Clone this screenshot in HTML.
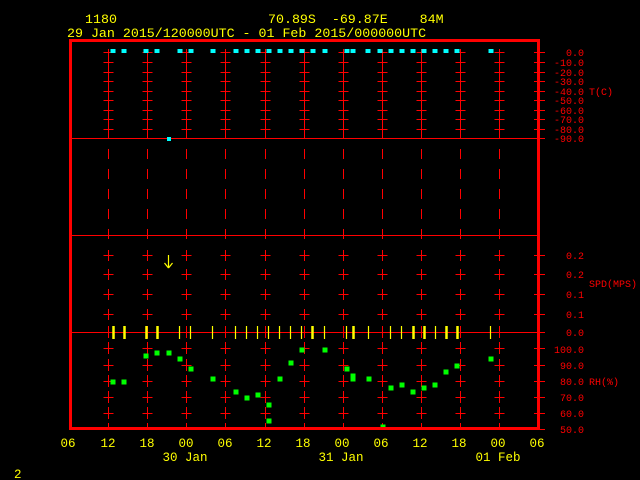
<!DOCTYPE html>
<html><head><meta charset="utf-8"><style>
html,body{margin:0;padding:0;background:#000;width:640px;height:480px;overflow:hidden}
svg{display:block}
text{font-family:"Liberation Mono","DejaVu Sans Mono",monospace}
.y{fill:#ffff00}.r{fill:#ff0000}
</style></head><body>
<svg id="s" width="640" height="480" xmlns="http://www.w3.org/2000/svg">
<rect width="640" height="480" fill="#000"/>
<g font-size="13.3" class="y">
<text x="85" y="23" class="y">1180</text>
<text x="268" y="23" class="y" xml:space="preserve">70.89S  -69.87E    84M</text>
<text x="67" y="37" class="y">29 Jan 2015/120000UTC - 01 Feb 2015/000000UTC</text>
</g>
<g id="g"></g>
<rect x="70.5" y="40.5" width="468" height="388" fill="none" stroke="#f00" stroke-width="3"/>
<g font-size="10" class="r" text-anchor="end">
<text x="584" y="56">0.0</text><text x="584" y="66">-10.0</text><text x="584" y="76">-20.0</text>
<text x="584" y="85">-30.0</text><text x="584" y="95">-40.0</text><text x="584" y="104">-50.0</text>
<text x="584" y="114">-60.0</text><text x="584" y="123">-70.0</text><text x="584" y="133">-80.0</text>
<text x="584" y="142">-90.0</text>
<text x="584" y="259">0.2</text><text x="584" y="278">0.2</text><text x="584" y="298">0.1</text>
<text x="584" y="318">0.1</text><text x="584" y="336">0.0</text>
<text x="584" y="353">100.0</text><text x="584" y="369">90.0</text><text x="584" y="385">80.0</text>
<text x="584" y="401">70.0</text><text x="584" y="417">60.0</text><text x="584" y="433">50.0</text>
</g>
<g font-size="10" class="r">
<text x="589" y="95">T(C)</text>
<text x="589" y="287">SPD(MPS)</text>
<text x="589" y="385">RH(%)</text>
</g>
<g font-size="12.5" class="y" text-anchor="middle">
<text x="68" y="447">06</text><text x="108" y="447">12</text><text x="147" y="447">18</text>
<text x="186" y="447">00</text><text x="225" y="447">06</text><text x="264" y="447">12</text>
<text x="303" y="447">18</text><text x="342" y="447">00</text><text x="381" y="447">06</text>
<text x="420" y="447">12</text><text x="459" y="447">18</text><text x="498" y="447">00</text>
<text x="537" y="447">06</text>
<text x="185" y="461">30 Jan</text><text x="341" y="461">31 Jan</text><text x="498" y="461">01 Feb</text>
</g>
<text x="14" y="478" font-size="12.5" class="y">2</text>
</svg>
<script>
var g=document.getElementById('g'),h='';
function L(x1,y1,x2,y2,c,w){h+='<line x1="'+x1+'" y1="'+y1+'" x2="'+x2+'" y2="'+y2+'" stroke="'+(c||'#f00')+'" stroke-width="'+(w||1)+'"/>';}
function R(x,y,w,hh,c){h+='<rect x="'+(x-w/2)+'" y="'+(y-hh/2)+'" width="'+w+'" height="'+hh+'" fill="'+c+'"/>';}
var cols=[];for(var k=1;k<12;k++)cols.push(Math.round(69+39.1*k)+0.5);
var t1=[52,62,72,81,91,100,110,119,129],t3=[255,274,294,314],t4=[348,365,381,397,413];
cols.forEach(function(x){
 L(x,49,x,138);
 t1.forEach(function(y){L(x-5,y+.5,x+5,y+.5);});
 [149,169,189,209,229].forEach(function(y){L(x,y,x,y+10);});
 t3.forEach(function(y){L(x-5,y+.5,x+5,y+.5);L(x,y-5,x,y+6);});
 L(x,326,x,338);
 t4.forEach(function(y){L(x-5,y+.5,x+5,y+.5);L(x,y-6,x,y+6);});
 L(x,423,x,428);
});
L(70,138.5,545,138.5);L(70,235.5,540,235.5);L(70,332.5,545,332.5);
t1.concat([138]).forEach(function(y){L(534,y+.5,545,y+.5);});
t3.concat(t4,[429]).forEach(function(y){L(534,y+.5,545,y+.5);});
[113,124,146,157,180,191,213,236,247,258,269,280,291,302,313,325,347,353,368,380,391,402,413,424,435,446,457,491].forEach(function(x){R(x,51,5,4,'#00ffff');});
R(169,139,4,4,'#00ffff');
var thick=[113,124,146,157,312,353,413,424,446,457];
[113,124,146,157,179,190,212,235,246,257,268,279,290,301,312,324,346,353,368,390,401,413,424,435,446,457,490].forEach(function(x){L(x+.5,326,x+.5,339,'#ffff00',thick.indexOf(x)>=0?2.5:1.2);});
L(168.5,255,168.5,268,'#ffff00',1.2);L(164.5,263,168.5,268,'#ffff00',1.2);L(172.5,263,168.5,268,'#ffff00',1.2);
[[113,382],[124,382],[146,356],[157,353],[169,353],[180,359],[191,369],[213,379],[236,392],[247,398],[258,395],[269,405],[269,421],[280,379],[291,363],[302,350],[325,350],[347,369],[353,376],[353,379],[369,379],[383,427],[391,388],[402,385],[413,392],[424,388],[435,385],[446,372],[457,366],[491,359]].forEach(function(p){R(p[0],p[1],5,5,'#00ff00');});
g.innerHTML=h;
</script>
</body></html>
